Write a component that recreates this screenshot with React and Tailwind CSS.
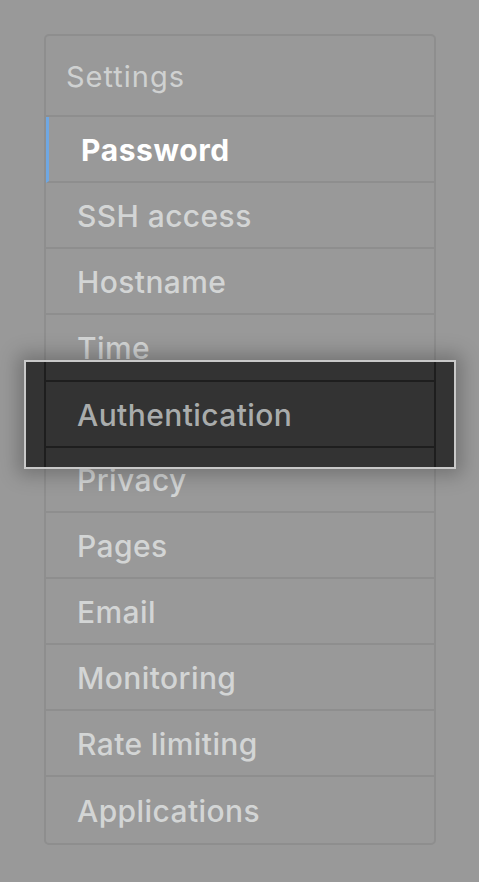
import React from "react";

const items = [
  "Password",
  "SSH access",
  "Hostname",
  "Time",
  "Authentication",
  "Privacy",
  "Pages",
  "Email",
  "Monitoring",
  "Rate limiting",
  "Applications",
];

const App = () => {
  return (
    <div
      className="relative min-h-screen w-[479px] h-[882px] bg-[#999999] pt-[34px] pl-[44px]"
      style={{ fontFamily: "Inter, 'Liberation Sans', sans-serif" }}
    >
      {/* Settings menu */}
      <nav className="w-[392px] rounded-[5px] border-2 border-[#8e8e8e]">
        <div className="h-[81px] flex items-center px-[20px] pt-[2px] border-b-2 border-[#8e8e8e] text-[29px] tracking-[1px] text-[#cfd1d1]">
          Settings
        </div>
        {items.map((item, i) => (
          <div
            key={item}
            className={`h-[66px] flex items-center pl-[31px] pt-[3px] text-[30px] ${
              i < items.length - 1 ? "border-b-2 border-[#8e8e8e]" : ""
            } ${
              i === 0
                ? "border-l-[3px] border-l-[#6fa7e2] pl-[32px] font-bold tracking-[0.6px] text-white"
                : "font-medium tracking-[0.4px] text-[#d3d5d5]"
            }`}
          >
            {item}
          </div>
        ))}
      </nav>

      {/* Highlight of the Authentication item */}
      <div className="absolute left-[24px] top-[360px] w-[432px] h-[109px] border-2 border-[#c9c9c9] bg-[#333333] shadow-[0_0_18px_6px_rgba(0,0,0,0.25)] overflow-hidden">
        <div className="ml-[18px] w-[392px] h-full border-x-2 border-[#1e1e1e] pt-[18px]">
          <div className="h-[68px] flex items-center pl-[31px] pt-[3px] border-y-2 border-[#1e1e1e] text-[30px] tracking-[0.4px] font-medium text-[#a9acac]">
            Authentication
          </div>
        </div>
      </div>
    </div>
  );
};

export default App;
